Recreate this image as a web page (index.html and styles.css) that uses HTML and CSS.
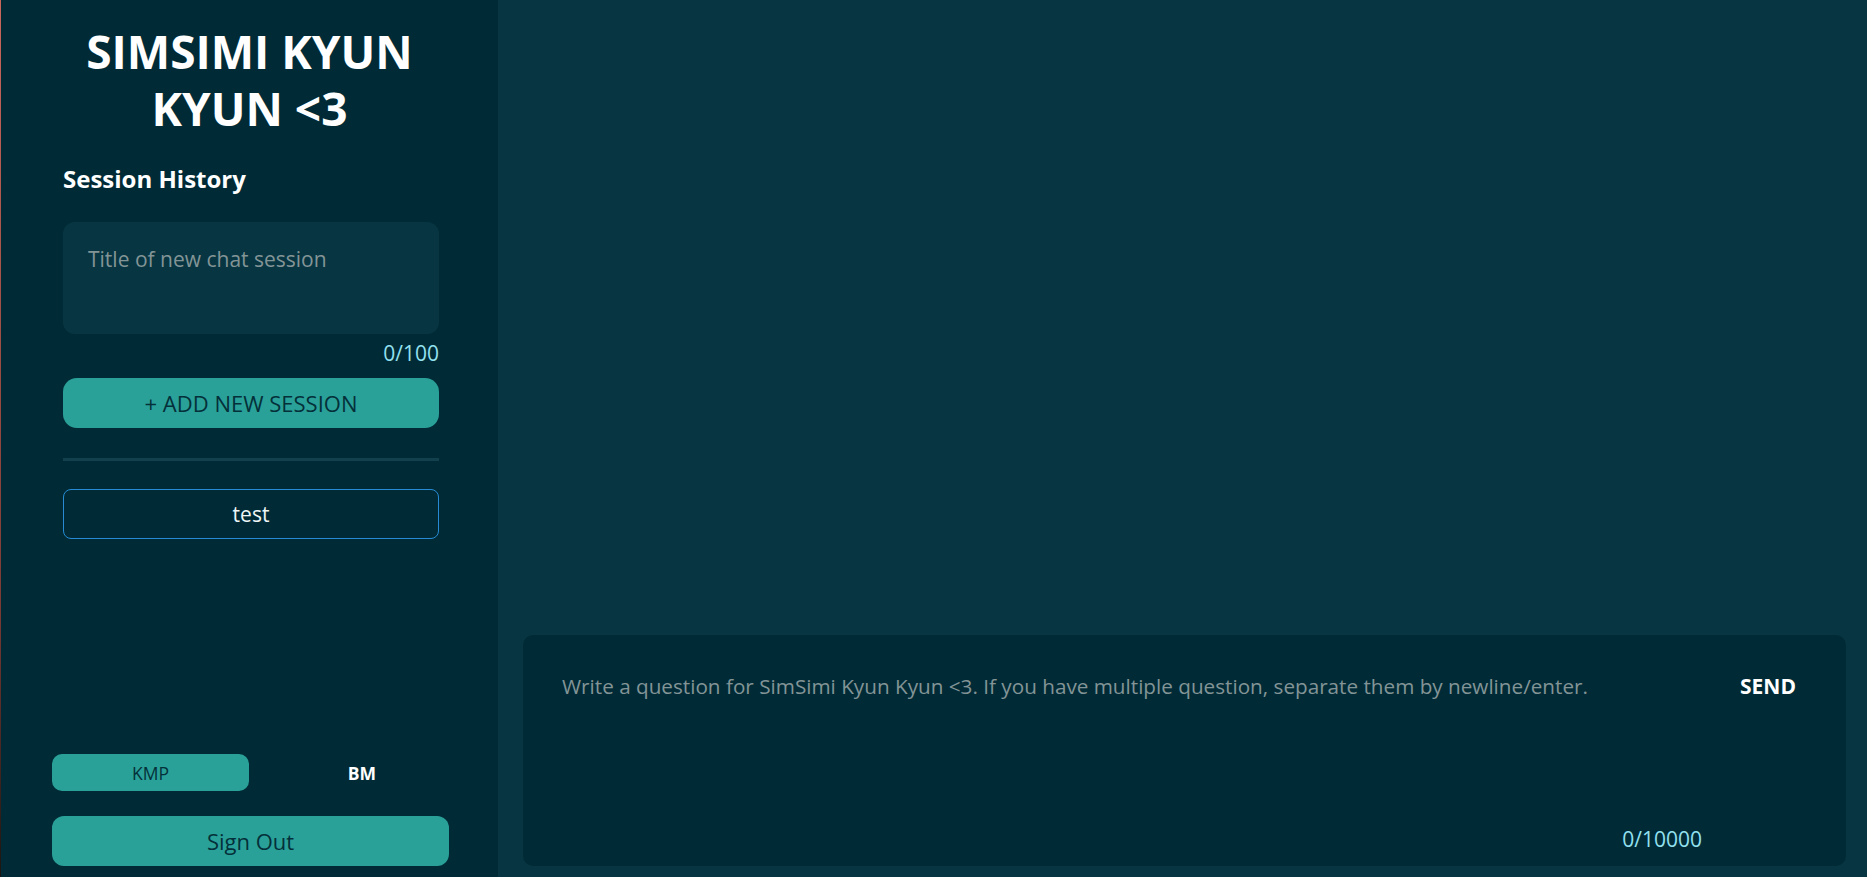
FILE: index.html
```html
<!DOCTYPE html>
<html lang="en">
<head>
  <meta charset="UTF-8" />
  <meta name="viewport" content="width=device-width, initial-scale=1.0" />
  <title>SimSimi Kyun Kyun &lt;3</title>
  <link rel="stylesheet" href="styles.css">
</head>
<body>
  <div class="app">
    <aside class="sidebar">
      <h1 class="brand">SIMSIMI KYUN<br>KYUN &lt;3</h1>

      <section class="sessions">
        <h2>Session History</h2>
        <textarea class="session-title" placeholder="Title of new chat session" maxlength="100"></textarea>
        <div class="counter">0/100</div>
        <button class="btn btn-teal btn-add">+ ADD NEW SESSION</button>
        <hr class="divider">
        <ul class="session-list">
          <li><button class="session-item">test</button></li>
        </ul>
      </section>

      <div class="sidebar-footer">
        <div class="lang-toggle">
          <button class="lang active">KMP</button>
          <button class="lang">BM</button>
        </div>
        <button class="btn btn-teal btn-signout">Sign Out</button>
      </div>
    </aside>

    <main class="chat">
      <div class="messages"></div>

      <form class="composer">
        <div class="composer-input">
          <textarea placeholder="Write a question for SimSimi Kyun Kyun <3. If you have multiple question, separate them by newline/enter." maxlength="10000"></textarea>
          <div class="counter">0/10000</div>
        </div>
        <div class="composer-send">
          <button type="submit" class="send">SEND</button>
        </div>
      </form>
    </main>
  </div>
</body>
</html>
```

FILE: styles.css
```css
* {
  margin: 0;
  padding: 0;
  box-sizing: border-box;
}

body {
  font-family: "Open Sans", "Noto Sans", sans-serif;
  background: #073642;
  color: #fff;
  height: 100vh;
  overflow: hidden;
}

button,
textarea {
  font-family: inherit;
}

.app {
  display: flex;
  height: 100vh;
}

/* sidebar */
.sidebar {
  width: 498px;
  flex-shrink: 0;
  background: #002b36;
  display: flex;
  flex-direction: column;
  border-left: 1px solid;
  border-image: linear-gradient(#c9675b, #7a3a34 70%, #1a1512) 1;
}

.brand {
  font-size: 46px;
  font-weight: 700;
  line-height: 57px;
  text-align: center;
  padding-top: 23px;
}

.sessions {
  padding: 0 59px 0 62px;
}

.sessions h2 {
  font-size: 24px;
  font-weight: 700;
  line-height: 30px;
  margin-top: 27px;
}

.session-title {
  display: block;
  width: 100%;
  height: 112px;
  margin-top: 28px;
  padding: 22px 25px;
  background: #073642;
  border: 0;
  border-radius: 12px;
  color: #eee;
  font-size: 21px;
  line-height: 30px;
  resize: none;
  outline: none;
}

.session-title::placeholder,
.composer textarea::placeholder {
  color: #839496;
}

.counter {
  color: #93e0f0;
  font-size: 21px;
  line-height: 30px;
  text-align: right;
}

.sessions .counter {
  margin-top: 4px;
}

.btn {
  display: block;
  width: 100%;
  border: 0;
  cursor: pointer;
}

.btn-teal {
  background: #2aa198;
  color: #04303a;
}

.btn-teal:hover {
  background: #31aea4;
}

.btn-add {
  height: 50px;
  margin-top: 10px;
  border-radius: 14px;
  font-size: 22px;
}

.divider {
  border: 0;
  height: 3px;
  background: #12404c;
  margin: 30px 0 0;
}

.session-list {
  list-style: none;
  margin-top: 28px;
}

.session-item {
  width: 100%;
  height: 50px;
  background: transparent;
  border: 1px solid #268bd2;
  border-radius: 8px;
  color: #eef6f6;
  font-size: 21px;
  cursor: pointer;
}

.sidebar-footer {
  margin-top: auto;
  padding: 0 49px 11px 51px;
}

.lang-toggle {
  display: flex;
  margin-bottom: 25px;
  width: 423px;
}

.lang {
  height: 37px;
  border: 0;
  border-radius: 10px;
  background: transparent;
  color: #fff;
  font-size: 17.5px;
  font-weight: 700;
  cursor: pointer;
}

.lang:first-child {
  width: 197px;
}

.lang:last-child {
  flex: 1;
}

.lang.active {
  background: #2aa198;
  color: #04303a;
  font-weight: 400;
}

.btn-signout {
  height: 50px;
  border-radius: 12px;
  font-size: 22px;
}

/* chat */
.chat {
  flex: 1;
  display: flex;
  flex-direction: column;
  padding: 0 21px 11px 25px;
}

.messages {
  flex: 1;
}

.composer {
  display: flex;
  height: 231px;
  background: #002b36;
  border-radius: 10px;
}

.composer-input {
  flex: 1;
  display: flex;
  flex-direction: column;
  padding: 36px 0 12px 39px;
}

.composer textarea {
  flex: 1;
  background: transparent;
  border: 0;
  outline: none;
  resize: none;
  color: #eee;
  font-size: 20.7px;
  line-height: 30px;
}

.composer-send {
  width: 144px;
  padding: 36px 12px 0 0;
  text-align: center;
}

.send {
  background: transparent;
  border: 0;
  color: #fff;
  font-size: 21px;
  font-weight: 700;
  line-height: 30px;
  cursor: pointer;
}
```
